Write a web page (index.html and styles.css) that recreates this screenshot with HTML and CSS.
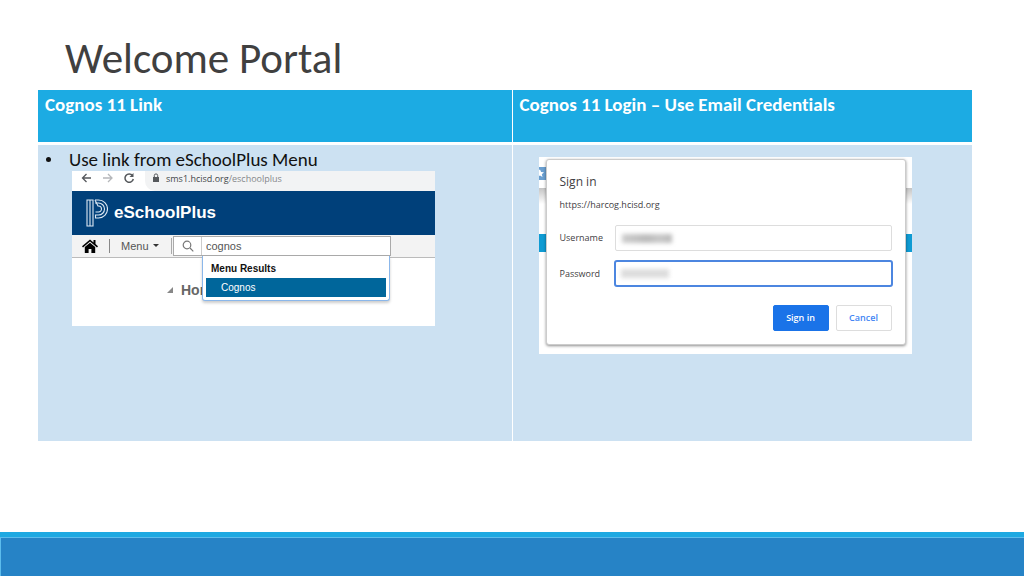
FILE: index.html
```html
<!DOCTYPE html>
<html lang="en">
<head>
<meta charset="utf-8">
<meta name="viewport" content="width=device-width, initial-scale=1">
<title>Welcome Portal</title>
<link rel="stylesheet" href="styles.css">
</head>
<body>
<main class="slide">
  <h1 class="title">Welcome Portal</h1>
  <table class="compare">
    <colgroup><col class="col-link"><col></colgroup>
    <thead>
      <tr><th scope="col">Cognos 11 Link</th><th scope="col">Cognos 11 Login – Use Email Credentials</th></tr>
    </thead>
    <tbody>
      <tr>
        <td>
          <ul class="steps"><li>Use link from eSchoolPlus Menu</li></ul>
          <section class="browser">
            <div class="address">
              <svg class="nav" viewBox="0 0 60 14" fill="none" stroke-width="1.3" aria-hidden="true">
                <path d="M10 7H1.500M5.500 3L1.500 7l4 4" stroke="#55585c"/>
                <path d="M22 7h9M27 3l4 4-4 4" stroke="#b5b7ba"/>
                <path d="M51.500 4.500A4.200 4.200 0 1 0 52.300 8" stroke="#55585c" stroke-width="1.500"/>
                <path d="M52.500 2v4h-4z" fill="#55585c"/>
              </svg>
              <div class="url">
                <svg class="lock" viewBox="0 0 8 10" aria-hidden="true"><path d="M1 4h6v5H1z" fill="#55585c"/><path d="M2.300 4V2.600a1.700 1.700 0 0 1 3.400 0V4" fill="none" stroke="#55585c"/></svg>
                <span>sms1.hcisd.org<span class="path">/eschoolplus</span></span>
              </div>
            </div>
            <div class="brand">
              <svg class="logo" viewBox="0 0 22 28" fill="none" stroke="#dce8f3" stroke-width="1.100" aria-hidden="true">
                <path d="M1 1v26h6V1zM4 1v26"/>
                <path d="M9 1h3.500a8.500 8.500 0 0 1 0 18H9.500v-3h3a5.700 5.700 0 0 0 0-12H9"/>
                <path d="M9 1l3 6h.5a2.800 2.800 0 0 1 0 6H9.500"/>
              </svg>
              <span>eSchoolPlus</span>
            </div>
            <div class="menubar">
              <a class="home" href="#" aria-label="Home"><svg viewBox="0 0 16 14" aria-hidden="true"><path d="M8 .5L0 7.200l1 1.200 7-5.800 7 5.800 1-1.200-2.500-2.100V1h-2v2.400z"/><path d="M8 3.800L2.800 8.100V14h3.800v-4h2.800v4h3.800V8.100z"/></svg></a>
              <button class="menu" type="button">Menu <i class="caret"></i></button>
              <div class="search">
                <svg class="glass" viewBox="0 0 12 12" fill="none" stroke="#777" stroke-width="1.200" aria-hidden="true"><circle cx="5" cy="5" r="3.800"/><path d="M8 8l3.300 3.300"/></svg>
                <input type="text" aria-label="Search menu" value="cognos">
                <div class="results">
                  <strong>Menu Results</strong>
                  <a href="#">Cognos</a>
                </div>
              </div>
            </div>
            <div class="page"><i class="fold"></i><span>Home</span></div>
          </section>
        </td>
        <td>
          <section class="backdrop">
            <svg class="star" viewBox="0 0 7 13" aria-hidden="true"><path d="M0 0h7v13H0z" fill="#6a9fd0"/><path d="M1 2.500l1.100 2.600 2.900.2-2.200 1.900.7 2.800L1 8.500l-1 .6V3z" fill="#fff"/></svg>
            <form class="dialog">
              <h2>Sign in</h2>
              <p>https://harcog.hcisd.org</p>
              <div class="fields">
                <label for="user">Username</label>
                <div class="field"><input id="user" type="text"><i class="smudge smudge-user"></i></div>
                <label for="pass">Password</label>
                <div class="field active"><input id="pass" type="password"><i class="smudge"></i></div>
              </div>
              <div class="actions">
                <button class="primary" type="button">Sign in</button>
                <button type="button">Cancel</button>
              </div>
            </form>
          </section>
        </td>
      </tr>
    </tbody>
  </table>
  <footer class="footer"></footer>
</main>
</body>
</html>
```
FILE: styles.css
```css
* { box-sizing: border-box; }

body {
  margin: 0;
  background: #fff;
  font-family: Carlito, Lato, "Open Sans", sans-serif;
  font-variant-ligatures: none;
}

.slide {
  display: flex;
  flex-direction: column;
  min-height: 100vh;
}

.title {
  margin: 0;
  padding: 32px 65px 4px;
  font-size: 43px;
  line-height: 54px;
  font-weight: 400;
  color: #404040;
}

.compare {
  margin: 0 52px 0 38px;
  border-collapse: collapse;
  table-layout: fixed;
}

.col-link { width: 474px; }

.compare th {
  height: 53px;
  padding: 4px 7px;
  background: #1cabe3;
  color: #fff;
  font-size: 19px;
  line-height: 22px;
  font-weight: 700;
  text-align: left;
  vertical-align: top;
}

.compare td {
  height: 298px;
  padding: 0;
  border-top: 3px solid #fff;
  background: #cce1f2;
  vertical-align: top;
}

.compare th + th,
.compare td + td { border-left: 1px solid #fff; }

.steps {
  margin: 0;
  padding: 4px 0 0 8px;
  color: #111;
  font-size: 19px;
  line-height: 22px;
  list-style: none;
}

.steps li {
  display: flex;
  align-items: center;
}

.steps li::before {
  content: "";
  width: 5px;
  height: 5px;
  margin-right: 18px;
  border-radius: 50%;
  background: #111;
}

/* browser window */
.browser {
  max-width: 363px;
  height: 155px;
  margin-left: 34px;
  overflow: hidden;
  background: #fff;
  font-family: "Liberation Sans", Arial, sans-serif;
}

.address {
  display: flex;
  height: 20px;
  padding-left: 9px;
}

.nav {
  flex: none;
  width: 60px;
  height: 14px;
}

.url {
  display: flex;
  flex: 1;
  gap: 6px;
  margin-left: 4px;
  padding-left: 7px;
  border-radius: 0 0 0 10px;
  background: #f2f3f4;
  color: #44474a;
  font: 9px/15px "Open Sans", sans-serif;
}

.lock {
  width: 8px;
  height: 10px;
  margin-top: 2px;
}

.path { color: #85888b; }

.brand {
  display: flex;
  align-items: center;
  gap: 6px;
  height: 44px;
  padding-left: 14px;
  background: #00407a;
  color: #fff;
  font-size: 17px;
  font-weight: 700;
}

.logo {
  width: 22px;
  height: 28px;
}

.menubar {
  display: flex;
  align-items: center;
  height: 23px;
  border-bottom: 1px solid #bbb;
  background: #f3f3f3;
}

.home {
  width: 38px;
  height: 14px;
  padding-left: 10px;
  border-right: 1px solid #888;
}

.home svg {
  display: block;
  width: 16px;
  height: 14px;
}

.menu {
  display: flex;
  align-items: center;
  gap: 4px;
  width: 62px;
  height: 16px;
  padding: 0 0 0 11px;
  border: 0;
  border-right: 1px solid #aaa;
  background: none;
  color: #555;
  font: 11px/16px "Liberation Sans", Arial, sans-serif;
}

.caret {
  border: 3px solid transparent;
  border-top-color: #333;
  border-bottom: 0;
}

.search {
  position: relative;
  display: flex;
  align-items: center;
  width: 218px;
  height: 20px;
  margin-left: 1px;
  border: 1px solid #aaa;
  background: #fff;
}

.glass {
  width: 12px;
  height: 12px;
  margin: 0 7px 0 8px;
}

.search input {
  flex: 1;
  min-width: 0;
  height: 18px;
  padding: 0 4px;
  border: 0;
  border-left: 1px solid #ccc;
  background: #fff;
  color: #555;
  font: 11px/18px "Liberation Sans", Arial, sans-serif;
}

.results {
  position: absolute;
  top: 19px;
  left: 28px;
  right: 0;
  padding: 3px 3px 3px;
  border: 1px solid #8bb7ea;
  border-top: 0;
  border-radius: 0 0 3px 3px;
  background: #fff;
  box-shadow: 0 2px 3px rgba(0, 0, 0, .2);
}

.results strong {
  display: block;
  padding-left: 5px;
  color: #111;
  font-size: 10px;
  line-height: 19px;
}

.results a {
  display: block;
  padding-left: 15px;
  background: #00669b;
  color: #fff;
  font-size: 10px;
  line-height: 19px;
  text-decoration: none;
}

.page {
  display: flex;
  align-items: center;
  gap: 8px;
  padding: 22px 0 0 95px;
  color: #666;
  font-size: 14px;
  font-weight: 700;
  line-height: 20px;
}

.fold {
  border: 3px solid transparent;
  border-right-color: #888;
  border-bottom-color: #888;
}

/* sign-in dialog over a web page */
.backdrop {
  position: relative;
  max-width: 373px;
  margin: 12px 0 0 26px;
  padding: 2px 6px 9px 7px;
  background:
    linear-gradient(#0f9bd3, #0f9bd3) 0 77px / 100% 18px no-repeat,
    linear-gradient(#c4c4c4, #fff) 0 31px / 100% 16px no-repeat,
    #fff;
  font-family: "Open Sans", "Noto Sans", sans-serif;
}

.star {
  position: absolute;
  top: 10px;
  left: 0;
  width: 7px;
  height: 13px;
}

.dialog {
  position: relative;
  padding: 13px;
  border: 1px solid #ccc;
  border-radius: 3px;
  background: #fff;
  box-shadow: 0 1px 3px rgba(0, 0, 0, .45);
  color: #3f4043;
  font-size: 9px;
}

.dialog h2 {
  margin: 0;
  font-size: 12px;
  font-weight: 400;
  line-height: 18px;
}

.dialog p {
  margin: 7px 0 13px;
  font-size: 9px;
  line-height: 14px;
}

.fields {
  display: grid;
  grid-template-columns: 55px 1fr;
  align-items: center;
  row-gap: 9px;
}

.field { position: relative; }

.field input {
  display: block;
  width: 100%;
  height: 26px;
  padding: 0 6px;
  border: 1px solid #ddd;
  border-radius: 2px;
  background: #fff;
}

.active { margin: 0 -1px; }

.active input {
  height: 27px;
  border: 2px solid #4c86e0;
  border-radius: 3px;
}

.smudge {
  position: absolute;
  top: 9px;
  left: 7px;
  width: 48px;
  height: 9px;
  background: #ddd;
  filter: blur(2px);
}

.smudge-user {
  width: 50px;
  background: linear-gradient(90deg, #ccc, #c4c4c4, #bbb, #c8c8c8, #bbb);
}

.actions {
  display: flex;
  justify-content: flex-end;
  gap: 7px;
  margin-top: 18px;
}

.actions button {
  width: 56px;
  height: 26px;
  padding: 0;
  border: 1px solid #ddd;
  border-radius: 2px;
  background: #fff;
  color: #4285f4;
  font: 600 9px/24px "Open Sans", "Noto Sans", sans-serif;
}

.actions .primary {
  border-color: #1a73e8;
  background: #1a73e8;
  color: #fff;
}

.footer {
  height: 44px;
  margin-top: auto;
  border-top: 5px solid #1ea9e2;
  background: #2683c6;
  box-shadow: inset 1px 1px #5cbcec;
}
```
